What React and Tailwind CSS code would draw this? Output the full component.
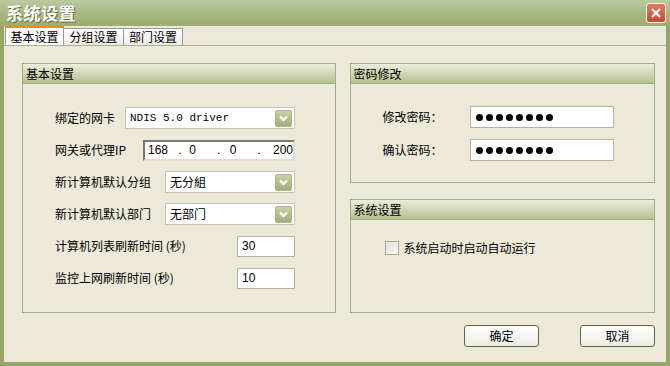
import React from "react";

const FONT = { fontFamily: '"Noto Sans CJK SC", "Noto Sans", sans-serif' };

const Chevron = () => (
  <span className="flex h-[17px] w-[17px] items-center justify-center rounded-[2px] border border-[#a8b48a] bg-gradient-to-b from-[#c8d1a8] to-[#a3ae7e]">
    <svg width="9" height="7" viewBox="0 0 9 7">
      <path d="M1 1.5 L4.5 5 L8 1.5" stroke="#ffffff" strokeWidth="2" fill="none" />
    </svg>
  </span>
);

const Combo = ({ value, width, mono }) => (
  <div
    className={`flex h-[22px] items-center justify-between border border-[#c4c2b4] bg-white pl-[4px] pr-[2px] ${width}`}
  >
    <span
      className={mono ? "text-[11px] text-black" : "text-[12px] text-black"}
      style={mono ? { fontFamily: '"Liberation Mono", monospace' } : FONT}
    >
      {value}
    </span>
    <Chevron />
  </div>
);

const TextBox = ({ value, width }) => (
  <div className={`flex h-[21px] items-center border border-[#b4b2a4] bg-white px-[4px] text-[12px] text-black ${width}`}>
    <span style={{ fontFamily: '"Liberation Sans", sans-serif' }}>{value}</span>
  </div>
);

const Row = ({ label, children }) => (
  <div className="flex h-[22px] items-center justify-between">
    <span className="text-[12px] text-black">{label}</span>
    {children}
  </div>
);

const GroupBox = ({ title, className, children }) => (
  <div className={`flex flex-col border border-[#a3ad84] ${className}`}>
    <div className="flex h-[20px] items-center border-b border-[#a3ad84] bg-gradient-to-b from-[#eceedd] to-[#b6c08e] px-[3px] text-[12px] text-black">
      {title}
    </div>
    {children}
  </div>
);

const Dots = () => (
  <div className="flex gap-[3px]">
    {Array.from({ length: 8 }).map((_, i) => (
      <span key={i} className="h-[7px] w-[7px] rounded-full bg-black" />
    ))}
  </div>
);

export default function App() {
  return (
    <div className="flex h-[366px] w-[670px] flex-col bg-[#93a76a]" style={FONT}>
      {/* title bar */}
      <div className="flex h-[26px] items-center justify-between bg-gradient-to-b from-[#bccaa0] via-[#a8b87f] to-[#9cad70] pl-[6px] pr-[4px]">
        <span
          className="text-[17px] font-bold tracking-[0.5px] text-white"
          style={{ textShadow: "1px 1px 0 #5d6b40" }}
        >
          系统设置
        </span>
        <span className="flex h-[20px] w-[20px] items-center justify-center rounded-[3px] border border-white bg-gradient-to-b from-[#e47a5f] to-[#c24a2e]">
          <svg width="12" height="12" viewBox="0 0 12 12">
            <path d="M2 2 L10 10 M10 2 L2 10" stroke="#ffffff" strokeWidth="2.2" />
          </svg>
        </span>
      </div>

      {/* body */}
      <div className="flex flex-1 flex-col border-x-[4px] border-b-[4px] border-[#93a76a] bg-[#ece9d8]">
        {/* tabs */}
        <div className="flex h-[19px] items-end pl-[1px]">
          <div className="flex h-[19px] w-[59px] items-center justify-center border-x border-t-[2px] border-[#919b9c] border-t-[#e68b2c] bg-white text-[12px] text-black">
            基本设置
          </div>
          <div className="flex h-[17px] w-[60px] items-center justify-center border-r border-t border-[#919b9c] bg-gradient-to-b from-white to-[#ecebe5] text-[12px] text-black">
            分组设置
          </div>
          <div className="flex h-[17px] w-[59px] items-center justify-center border-r border-t border-[#919b9c] bg-gradient-to-b from-white to-[#ecebe5] text-[12px] text-black">
            部门设置
          </div>
        </div>

        <div className="flex flex-1 border-t border-[#a8ae9c] pl-[18px] pr-[11px] pt-[17px]">
          {/* left column */}
          <GroupBox title="基本设置" className="h-[250px] w-[314px]">
            <div className="ml-[32px] mt-[23px] flex w-[240px] flex-col gap-[10px]">
              <Row label="绑定的网卡">
                <Combo value="NDIS 5.0 driver" width="w-[170px]" mono />
              </Row>
              <Row label="网关或代理IP">
                <div className="flex h-[21px] w-[152px] items-center border-[2px] border-[#7a786c] border-b-[#e0ded2] border-r-[#e0ded2] bg-white pl-[3px] text-[12px] text-black" style={{ fontFamily: '"Liberation Sans", sans-serif' }}>
                  <span className="w-[31px]">168</span>
                  <span className="w-[11px]">.</span>
                  <span className="w-[28px]">0</span>
                  <span className="w-[13px]">.</span>
                  <span className="w-[28px]">0</span>
                  <span className="w-[16px]">.</span>
                  <span>200</span>
                </div>
              </Row>
              <Row label="新计算机默认分组">
                <Combo value="无分組" width="w-[130px]" />
              </Row>
              <Row label="新计算机默认部门">
                <Combo value="无部门" width="w-[130px]" />
              </Row>
              <Row label="计算机列表刷新时间 (秒)">
                <TextBox value="30" width="w-[58px]" />
              </Row>
              <Row label="监控上网刷新时间 (秒)">
                <TextBox value="10" width="w-[58px]" />
              </Row>
            </div>
          </GroupBox>

          {/* right column */}
          <div className="ml-[14px] flex w-[306px] flex-col">
            <GroupBox title="密码修改" className="h-[120px]">
              <div className="ml-[32px] mt-[22px] flex w-[231px] flex-col gap-[11px]">
                <Row label="修改密码：">
                  <div className="flex h-[22px] w-[144px] items-center border border-[#b4b2a4] bg-white pl-[5px]">
                    <Dots />
                  </div>
                </Row>
                <Row label="确认密码：">
                  <div className="flex h-[22px] w-[144px] items-center border border-[#b4b2a4] bg-white pl-[5px]">
                    <Dots />
                  </div>
                </Row>
              </div>
            </GroupBox>

            <GroupBox title="系统设置" className="mt-[16px] h-[114px]">
              <div className="ml-[34px] mt-[19px] flex items-center gap-[5px] text-[12px] text-black">
                <span className="h-[14px] w-[14px] border border-[#a4a896] bg-gradient-to-br from-[#e6e4da] to-[#f6f5f0]" />
                <span>系统启动时启动自动运行</span>
              </div>
            </GroupBox>

            <div className="mt-[12px] flex justify-end gap-[41px]">
              <button className="flex h-[22px] w-[75px] items-center justify-center rounded-[3px] border border-[#5e6a3c] bg-gradient-to-b from-white to-[#ecebe3] text-[12px] text-black">
                确定
              </button>
              <button className="flex h-[22px] w-[75px] items-center justify-center rounded-[3px] border border-[#5e6a3c] bg-gradient-to-b from-white to-[#ecebe3] text-[12px] text-black">
                取消
              </button>
            </div>
          </div>
        </div>
      </div>
    </div>
  );
}
